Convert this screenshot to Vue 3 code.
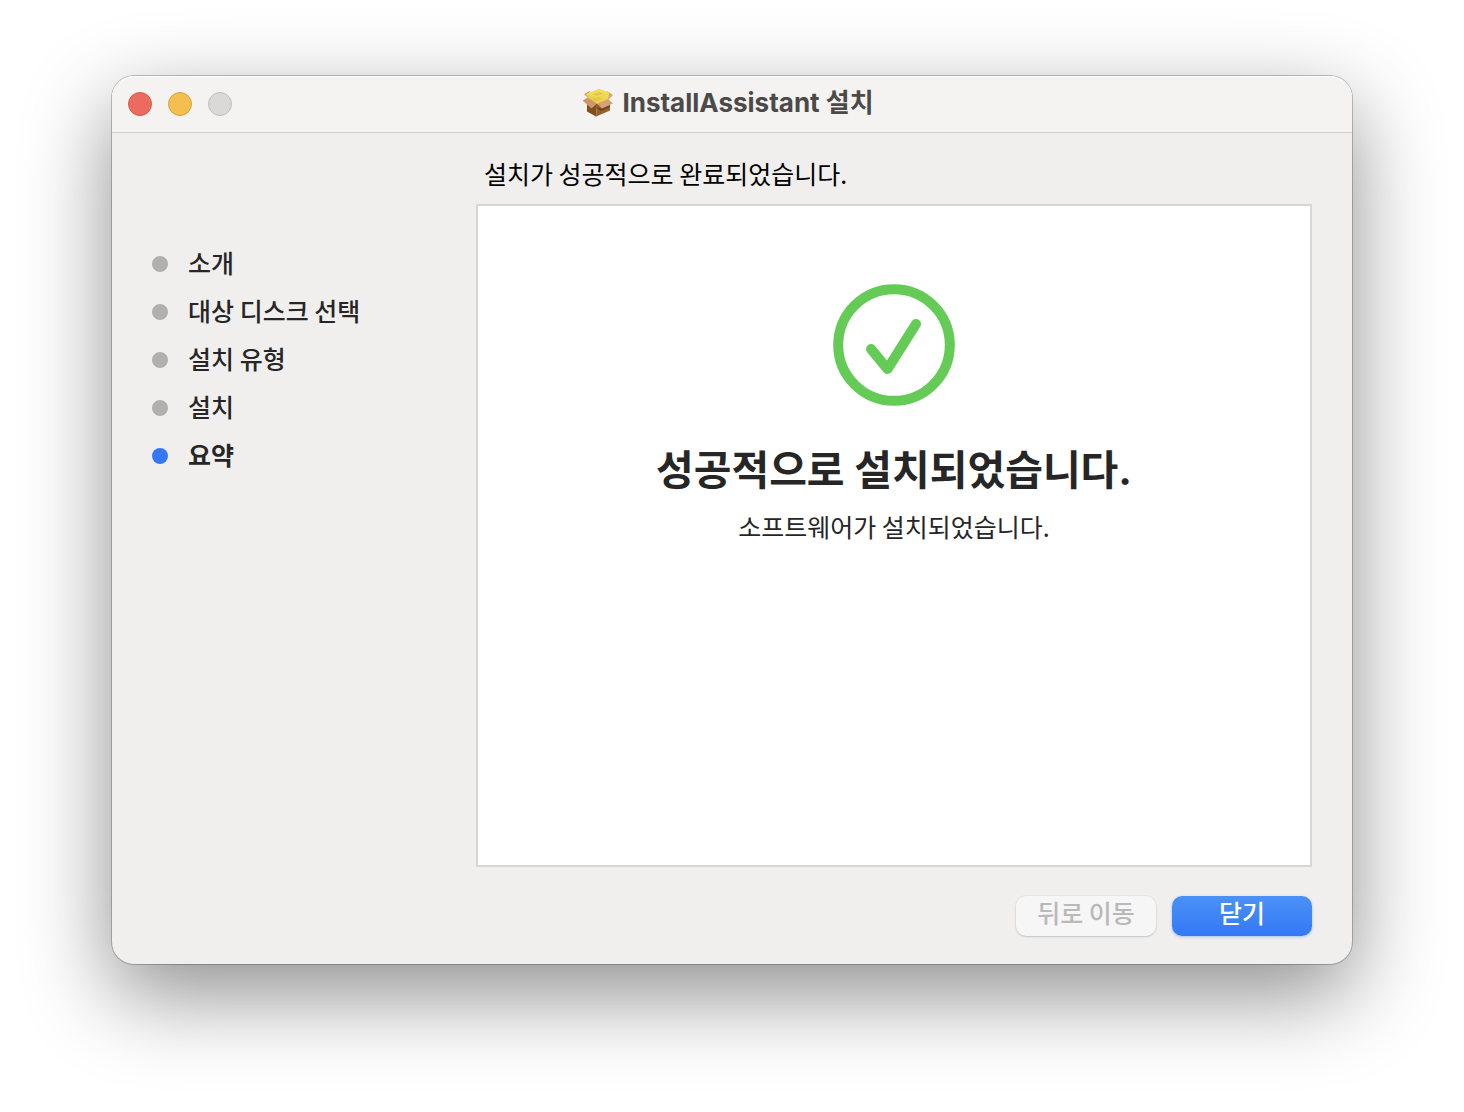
<script setup>
const steps = [
  { label: '소개', current: false },
  { label: '대상 디스크 선택', current: false },
  { label: '설치 유형', current: false },
  { label: '설치', current: false },
  { label: '요약', current: true },
]
</script>

<template>
  <div class="desktop">
    <main class="window">
      <header class="titlebar">
        <div class="controls">
          <button class="light close" type="button" aria-label="닫기"></button>
          <button class="light minimize" type="button" aria-label="최소화"></button>
          <button class="light zoom" type="button" aria-label="확대" disabled></button>
        </div>
        <h1 class="title">
          <svg class="package" viewBox="0 0 32 30" aria-hidden="true">
            <path d="M5 13 15 16 14 28.500 5 23.500Z" fill="#80501f" />
            <path d="M15 16 28 13 28 22.500 14 28.500Z" fill="#93602d" />
            <path d="M2 6 8 3 6 10Z" fill="#d39b6a" />
            <path d="M25 3 31 7 26 12Z" fill="#d9a477" />
            <path d="M4 6 17 1 27 4.500 26 11.500 15 16 6 10Z" fill="#ecd34a" />
            <path d="M4 6 17 1 27 4.500 15 9Z" fill="#f1dc5c" />
            <path d="M10 6.500 17 4 22 5.500 15 8Z" fill="#e2c74a" />
            <path d="M15 9 27 4.500 26 11.500 15 16Z" fill="#efd752" />
            <path d="M9 11 16 9 21 11 15 13.500Z" fill="#e4c846" />
            <path d="M14 19 20 20.500 28 17V19L19 23Z" fill="#6f4219" />
            <path d="M6 9.500 15 15.500 9.500 20.500 0.500 12.500Z" fill="#d09766" />
            <path d="M15 15.500 26 11 31 15.500 20 20.500Z" fill="#d7a273" />
          </svg>
          <span>InstallAssistant 설치</span>
        </h1>
      </header>

      <div class="body">
        <nav class="sidebar" aria-label="설치 단계">
          <ol class="steps">
            <li
              v-for="step in steps"
              :key="step.label"
              class="step"
              :class="{ current: step.current }"
              :aria-current="step.current ? 'step' : undefined"
            >
              <span class="dot"></span>
              <span class="label">{{ step.label }}</span>
            </li>
          </ol>
        </nav>

        <div class="content">
          <p class="status">설치가 성공적으로 완료되었습니다.</p>
          <section class="panel">
            <svg class="check" viewBox="0 0 122 122" aria-hidden="true">
              <circle cx="61" cy="61" r="55.800" />
              <path d="M38 65 54.500 85 83 40" />
            </svg>
            <h2 class="headline">성공적으로 설치되었습니다.</h2>
            <p class="detail">소프트웨어가 설치되었습니다.</p>
          </section>
          <footer class="actions">
            <button class="button" type="button" disabled>뒤로 이동</button>
            <button class="button primary" type="button">닫기</button>
          </footer>
        </div>
      </div>
    </main>
  </div>
</template>

<style>
body {
  margin: 0;
  background: #fff;
}
</style>

<style scoped>
* {
  box-sizing: border-box;
}

.desktop {
  display: flex;
  min-height: 100vh;
  padding: 76px 112px 148px;
  font-family: "Noto Sans CJK KR", sans-serif;
  font-size: 25px;
  font-weight: 500;
  line-height: 32px;
  color: #262626;
}

.window {
  display: flex;
  flex: 1;
  flex-direction: column;
  border-radius: 22px;
  background: #f0efed;
  box-shadow:
    0 0 0 1px rgba(0, 0, 0, 0.22),
    0 30px 88px rgba(0, 0, 0, 0.45);
}

.titlebar {
  display: grid;
  grid-template-columns: 1fr auto 1fr;
  align-items: center;
  height: 57px;
  padding: 0 16px;
  border-bottom: 1px solid #cfcdcb;
  border-radius: 22px 22px 0 0;
  background: #f4f3f1;
  box-shadow: inset 0 1px #fcfcfb;
}

.controls {
  display: flex;
  gap: 16px;
}

.light {
  width: 24px;
  height: 24px;
  padding: 0;
  border: 1px solid;
  border-radius: 50%;
}

.close {
  border-color: #d8574c;
  background: #ed6a5e;
}

.minimize {
  border-color: #d8a03d;
  background: #f5bf4f;
}

.zoom {
  border-color: #c0bfbe;
  background: #dad9d8;
}

.title {
  display: flex;
  align-items: center;
  gap: 8px;
  margin: 0;
  padding: 0 8px 3px 0;
  font-family: Inter, "Noto Sans CJK KR", sans-serif;
  font-size: 26px;
  font-weight: 700;
  color: #4b4a49;
}

.package {
  width: 32px;
  height: 30px;
}

.body {
  display: flex;
  flex: 1;
  padding: 24px 40px 28px;
}

.sidebar {
  flex: 0 0 324px;
  padding-top: 91px;
}

.steps {
  display: flex;
  flex-direction: column;
  gap: 16px;
  margin: 0;
  padding: 0;
  list-style: none;
}

.step {
  display: flex;
  align-items: center;
  gap: 20px;
}

.label {
  padding-bottom: 4px;
  line-height: 28px;
}

.dot {
  width: 16px;
  height: 16px;
  border-radius: 50%;
  background: #b1b0af;
}

.current {
  font-weight: 700;
}

.current .dot {
  background: #3478f6;
}

.content {
  display: flex;
  flex: 1;
  flex-direction: column;
}

.status {
  margin: 0 8px 15px;
  font-weight: 400;
  color: #000;
}

.panel {
  display: flex;
  flex: 1;
  flex-direction: column;
  align-items: center;
  padding-top: 78px;
  border: 2px solid #d7d6d5;
  background: #fff;
}

.check {
  width: 122px;
  height: 122px;
  fill: none;
  stroke: #65cb57;
  stroke-width: 10;
  stroke-linecap: round;
  stroke-linejoin: round;
}

.headline {
  margin: 34px 0 10px;
  font-family: Inter, "Noto Sans CJK KR", sans-serif;
  font-size: 41px;
  font-weight: 700;
  line-height: 60px;
}

.detail {
  margin: 0;
  font-weight: 400;
}

.actions {
  display: flex;
  justify-content: flex-end;
  gap: 16px;
  margin-top: 29px;
}

.button {
  width: 140px;
  height: 40px;
  padding: 0 0 8px;
  border: 0;
  border-radius: 10px;
  background: #f6f6f6;
  box-shadow: 0 0 0 1px rgba(0, 0, 0, 0.03), 0 1px 2px rgba(0, 0, 0, 0.15);
  font: inherit;
  color: #b9b9b9;
}

.primary {
  background: linear-gradient(#4b91f7, #3478f6);
  box-shadow: 0 1px 3px rgba(52, 120, 246, 0.4);
  color: #fff;
}
</style>
